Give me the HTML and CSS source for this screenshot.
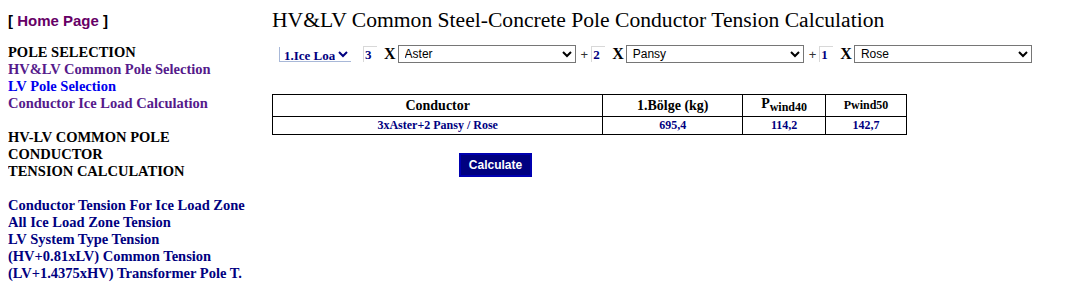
FILE: index.html
```html
<!DOCTYPE html>
<html lang="en">
<head>
  <meta charset="UTF-8">
  <title>HV&amp;LV Common Steel-Concrete Pole Conductor Tension Calculation</title>
  <link rel="stylesheet" href="styles.css">
</head>
<body>
  <div class="page">
    <div class="side">
      <div class="home">[ <a href="#">Home Page</a> ]</div>
      <div class="menu">
        <div class="menu-title">POLE SELECTION</div>
        <a class="visited" href="#">HV&amp;LV Common Pole Selection</a>
        <a class="fresh" href="#">LV Pole Selection</a>
        <a class="visited" href="#">Conductor Ice Load Calculation</a>
      </div>
      <div class="menu">
        <div class="menu-title">HV-LV COMMON POLE<br>CONDUCTOR<br>TENSION CALCULATION</div>
      </div>
      <div class="menu">
        <a class="navy" href="#">Conductor Tension For Ice Load Zone</a>
        <a class="navy" href="#">All Ice Load Zone Tension</a>
        <a class="navy" href="#">LV System Type Tension</a>
        <a class="navy" href="#">(HV+0.81xLV) Common Tension</a>
        <a class="navy" href="#">(LV+1.4375xHV) Transformer Pole T.</a>
      </div>
    </div>

    <div class="main">
      <h1 class="title">HV&amp;LV Common Steel-Concrete Pole Conductor Tension Calculation</h1>

      <div class="picker">
        <select class="zone">
          <option>1.Ice Loa</option>
        </select>
        <input class="count" type="text" value="3">
        <span class="times">X</span>
        <select class="wire">
          <option>Aster</option>
        </select>
        <span class="plus">+</span>
        <input class="count" type="text" value="2">
        <span class="times">X</span>
        <select class="wire">
          <option>Pansy</option>
        </select>
        <span class="plus">+</span>
        <input class="count" type="text" value="1">
        <span class="times">X</span>
        <select class="wire">
          <option>Rose</option>
        </select>
      </div>

      <table class="result">
        <tr>
          <th class="c1">Conductor</th>
          <th class="c2">1.Bölge (kg)</th>
          <th class="c3">P<sub>wind40</sub></th>
          <th class="c4">Pwind50</th>
        </tr>
        <tr>
          <td>3xAster+2 Pansy / Rose</td>
          <td>695,4</td>
          <td>114,2</td>
          <td>142,7</td>
        </tr>
      </table>

      <div class="actions">
        <button class="calc-btn">Calculate</button>
      </div>
    </div>
  </div>
</body>
</html>
```

FILE: styles.css
```css
/* Basic layout */
body {
  margin: 8px;
  background: #fff;
  font-family: "Liberation Serif", "Times New Roman", serif;
  color: #000;
}

.page {
  display: flex;
}

/* Left menu */
.side {
  width: 264px;
  flex: none;
}
.home {
  font-family: "Liberation Sans", Arial, sans-serif;
  font-weight: bold;
  font-size: 15px;
  margin-top: 4px;
  margin-bottom: 15px;
}
.home a {
  color: #660066;
  text-decoration: none;
}
.menu {
  font-size: 14.5px;
  font-weight: bold;
  line-height: 17px;
  margin-bottom: 17px;
}
.menu a {
  display: block;
  text-decoration: none;
  white-space: nowrap;
}
.menu a.visited {
  color: #551a8b;
}
.menu a.fresh {
  color: #0000ee;
}
.menu a.navy {
  color: #000080;
}

/* Main area */
.main {
  flex: 1;
}
.title {
  font-size: 21.6px;
  font-weight: normal;
  margin: 0 0 13px 0;
  line-height: 24px;
}

.picker {
  display: flex;
  align-items: center;
  height: 18px;
  padding-left: 7px;
}
.zone {
  width: 72px;
  height: 15px;
  font-family: "Liberation Serif", serif;
  font-weight: bold;
  font-size: 13px;
  color: #000080;
  border: none;
  border-bottom: 1px solid #a8b8d8;
  border-left: 1px solid #a8b8d8;
  padding: 0;
  background: #fff;
  margin-right: 12px;
}
.count {
  box-sizing: border-box;
  width: 14px;
  height: 16px;
  padding: 0 1px;
  border: 1px solid #d8d8d8;
  border-right: none;
  border-bottom: none;
  font-family: "Liberation Serif", serif;
  font-weight: bold;
  font-size: 13px;
  color: #000080;
}
.times {
  font-weight: bold;
  font-size: 16px;
  margin: 0 2px 0 7px;
}
.wire {
  width: 178px;
  height: 18px;
  font-family: "Liberation Sans", Arial, sans-serif;
  font-size: 12px;
  border: 1px solid #767676;
  border-radius: 0;
  padding: 0 2px;
  background: #fff;
  color: #000;
}
.plus {
  font-family: "Liberation Sans", Arial, sans-serif;
  font-size: 13px;
  color: #333;
  margin: 0 3px 0 5px;
}

/* Result table */
.result {
  margin-top: 31px;
  border-collapse: collapse;
  width: 635px;
}
.result th,
.result td {
  border: 1px solid #000;
  text-align: center;
  font-weight: bold;
  padding: 0;
}
.result th {
  font-size: 14px;
  height: 21px;
}
.result td {
  font-size: 12px;
  color: #000080;
  height: 17px;
}
.result sub {
  font-size: 12px;
  vertical-align: -3px;
}
.result th.c4 {
  font-size: 12px;
}
.c1 { width: 330px; }
.c2 { width: 139px; }
.c3 { width: 82px; }
.c4 { width: 80px; }

.actions {
  margin-top: 18px;
  padding-left: 187px;
}
.calc-btn {
  background: #000080;
  color: #fff;
  font-family: "Liberation Sans", Arial, sans-serif;
  font-weight: bold;
  font-size: 12px;
  border: 2px solid #0000b0;
  width: 73px;
  height: 24px;
  padding: 0;
}
```
